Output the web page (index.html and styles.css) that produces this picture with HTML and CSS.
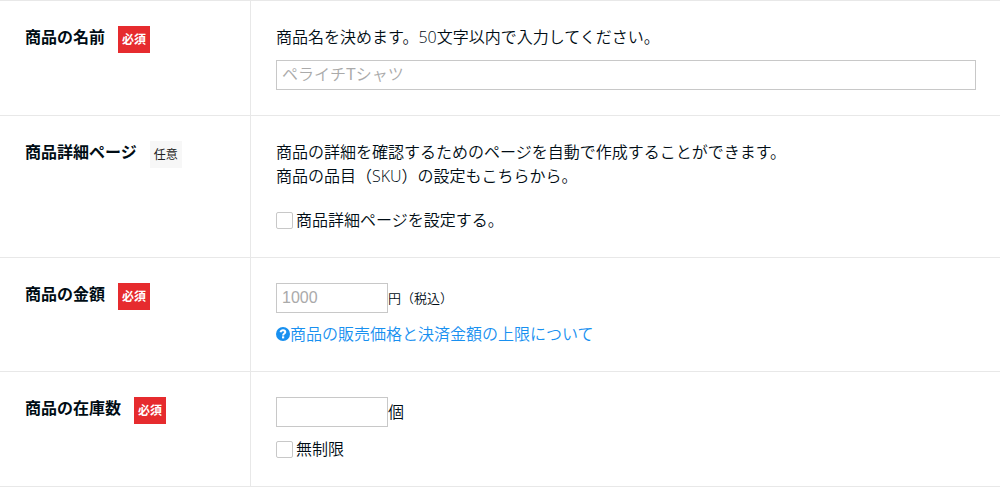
FILE: index.html
```html
<!DOCTYPE html>
<html lang="ja">
<head>
    <meta charset="UTF-8">
    <title>商品の設定</title>
    <meta name="viewport" content="width=device-width, initial-scale=1.0">
    <link rel="stylesheet" href="styles.css">
</head>
<body>
    <form class="product-form">
        <div class="row">
            <div class="row-head">
                <label class="row-title" for="name">商品の名前</label>
                <span class="tag required">必須</span>
            </div>
            <div class="row-body">
                <p class="text">商品名を決めます。50文字以内で入力してください。</p>
                <input class="field" type="text" id="name" placeholder="ペライチTシャツ">
            </div>
        </div>

        <div class="row">
            <div class="row-head">
                <span class="row-title">商品詳細ページ</span>
                <span class="tag optional">任意</span>
            </div>
            <div class="row-body">
                <p class="text">商品の詳細を確認するためのページを自動で作成することができます。<br>商品の品目（SKU）の設定もこちらから。</p>
                <label class="check detail-check"><input type="checkbox">商品詳細ページを設定する。</label>
            </div>
        </div>

        <div class="row">
            <div class="row-head">
                <label class="row-title" for="price">商品の金額</label>
                <span class="tag required">必須</span>
            </div>
            <div class="row-body">
                <div class="amount">
                    <input class="field short" type="text" id="price" placeholder="1000">
                    <span class="unit small">円（税込）</span>
                </div>
                <a class="help" href="#">
                    <svg class="help-icon" viewBox="0 0 14 14" aria-hidden="true">
                        <circle cx="7" cy="7" r="7" fill="currentColor"/>
                        <path d="M4.5 5.3C4.9 3.8 5.7 3.2 7 3.2C8.4 3.2 9.3 4 9.3 5.1C9.3 6.5 7.1 6.6 7.1 8.4" fill="none" stroke="#fff" stroke-width="2"/>
                        <path d="M6 9.3h2.2v2.1h-2.2z" fill="#fff"/>
                    </svg>商品の販売価格と決済金額の上限について</a>
            </div>
        </div>

        <div class="row">
            <div class="row-head">
                <label class="row-title" for="stock">商品の在庫数</label>
                <span class="tag required">必須</span>
            </div>
            <div class="row-body">
                <div class="amount">
                    <input class="field short" type="text" id="stock">
                    <span class="unit">個</span>
                </div>
                <label class="check stock-check"><input type="checkbox">無制限</label>
            </div>
        </div>
    </form>
</body>
</html>
```

FILE: styles.css
```css
* {
    box-sizing: border-box;
}

body {
    margin: 0;
    background: #fff;
    color: #000c14;
    font-family: "Open Sans", "Noto Sans CJK JP", sans-serif;
    font-size: 16px;
    font-weight: 350;
    line-height: 24px;
}

.product-form {
    border-top: 1px solid #e8e8e8;
}

.row {
    display: flex;
    border-bottom: 1px solid #e8e8e8;
}

.row-head {
    display: flex;
    align-items: flex-start;
    gap: 13px;
    flex: 0 0 251px;
    padding: 24px 25px;
    border-right: 1px solid #e8e8e8;
}

.row-title {
    font-weight: bold;
}

.tag {
    margin-top: 1px;
    padding: 2px 4px 1px;
    font-size: 12px;
}

.required {
    background: #e62b2e;
    color: #fff;
    font-weight: bold;
}

.optional {
    background: #f7f7f7;
    color: #222;
    font-weight: 400;
}

.row-body {
    flex: 1;
    min-width: 0;
    padding: 24px 24px 25px 25px;
}

.text {
    margin: 0;
}

.field {
    display: block;
    width: 100%;
    height: 30px;
    padding: 0 5px;
    border: 1px solid #c8c8c8;
    border-radius: 0;
    background: #fff;
    color: inherit;
    font-family: "Liberation Sans", "Noto Sans CJK JP", sans-serif;
    font-size: 16px;
    font-weight: inherit;
}

.field::placeholder {
    color: #aaa;
}

.text + .field {
    margin-top: 11px;
}

.short {
    width: 112px;
}

.amount {
    display: flex;
    align-items: center;
    padding-top: 1px;
}

.small {
    font-size: 13px;
}

.check {
    display: flex;
    align-items: center;
    gap: 3px;
}

.check input {
    appearance: none;
    width: 17px;
    height: 17px;
    margin: 0;
    border: 1px solid #c8c8c8;
    border-radius: 2px;
    background: #fff;
}

.check input:checked {
    background: #2196f3;
}

.detail-check {
    margin-top: 20px;
}

.stock-check {
    margin-top: 10px;
}

.help {
    display: flex;
    align-items: center;
    margin-top: 9px;
    color: #1890f0;
    text-decoration: none;
}

.help-icon {
    width: 14px;
    height: 14px;
}
```
